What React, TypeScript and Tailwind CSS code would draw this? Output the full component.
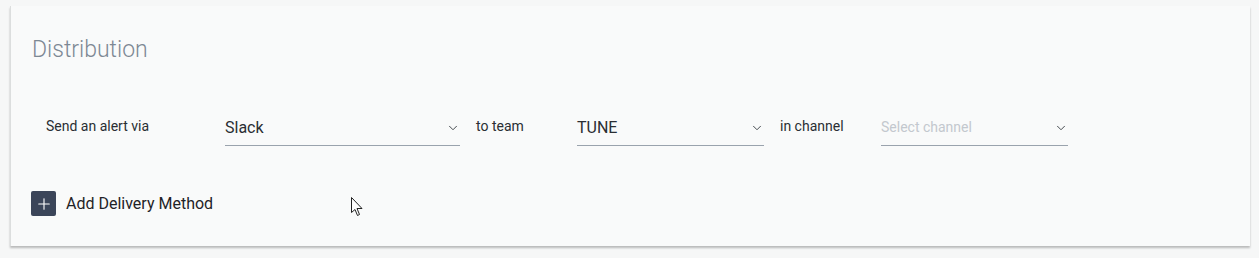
import { ChevronDown, Plus } from "lucide-react";

function Select(props: { value: string; placeholder?: boolean; width: string }) {
  return (
    <div
      className={`${props.width} h-[40px] flex items-center justify-between border-b border-[#9aa3ad] pt-[4px]`}
    >
      <span
        className={
          props.placeholder
            ? "text-[14px] text-[#c3c8ce]"
            : "text-[16px] text-[#2a2e33]"
        }
      >
        {props.value}
      </span>
      <ChevronDown className="w-[14px] h-[14px] text-[#3a3f45]" strokeWidth={1.6} />
    </div>
  );
}

export default function App() {
  return (
    <main
      className="relative w-[1259px] h-[258px] bg-[#f6f7f7] pt-[6px] px-[10px]"
      style={{ fontFamily: "Roboto, 'Liberation Sans', sans-serif" }}
    >
      <section className="w-[1240px] h-[240px] bg-[#f9fafa] border-l border-[#dcdede] shadow-[0_2px_2px_rgba(0,0,0,0.25)] flex flex-col">
        <h1 className="text-[23px] font-light text-[#7d8894] pl-[21px] pt-[30px] leading-[28px]">
          Distribution
        </h1>

        <div className="flex items-center mt-[42px] pl-[35px]">
          <span className="w-[179px] text-[14px] text-[#2a2e33]">Send an alert via</span>
          <Select value="Slack" width="w-[235px]" />
          <span className="w-[117px] pl-[16px] text-[14px] text-[#2a2e33]">to team</span>
          <Select value="TUNE" width="w-[187px]" />
          <span className="w-[117px] pl-[16px] text-[14px] text-[#2a2e33]">in channel</span>
          <Select value="Select channel" placeholder width="w-[187px]" />
        </div>

        <button className="flex items-center gap-[10px] mt-[45px] ml-[20px] w-fit">
          <span className="w-[25px] h-[25px] rounded-[2px] bg-[#3b4559] flex items-center justify-center">
            <Plus className="w-[18px] h-[18px] text-white" strokeWidth={1.5} />
          </span>
          <span className="text-[16px] text-[#1f2327]">Add Delivery Method</span>
        </button>
      </section>

      {/* mouse pointer captured in the screenshot */}
      <svg
        className="absolute left-[351px] top-[197px]"
        width="13"
        height="20"
        viewBox="0 0 13 20"
      >
        <path
          d="M0.5 0.5 L0.5 15.5 L4 12.5 L6.5 18.5 L8.5 17.5 L6 11.5 L11 11.5 Z"
          fill="white"
          stroke="#222"
          strokeWidth="1"
          strokeLinejoin="round"
        />
      </svg>
    </main>
  );
}
